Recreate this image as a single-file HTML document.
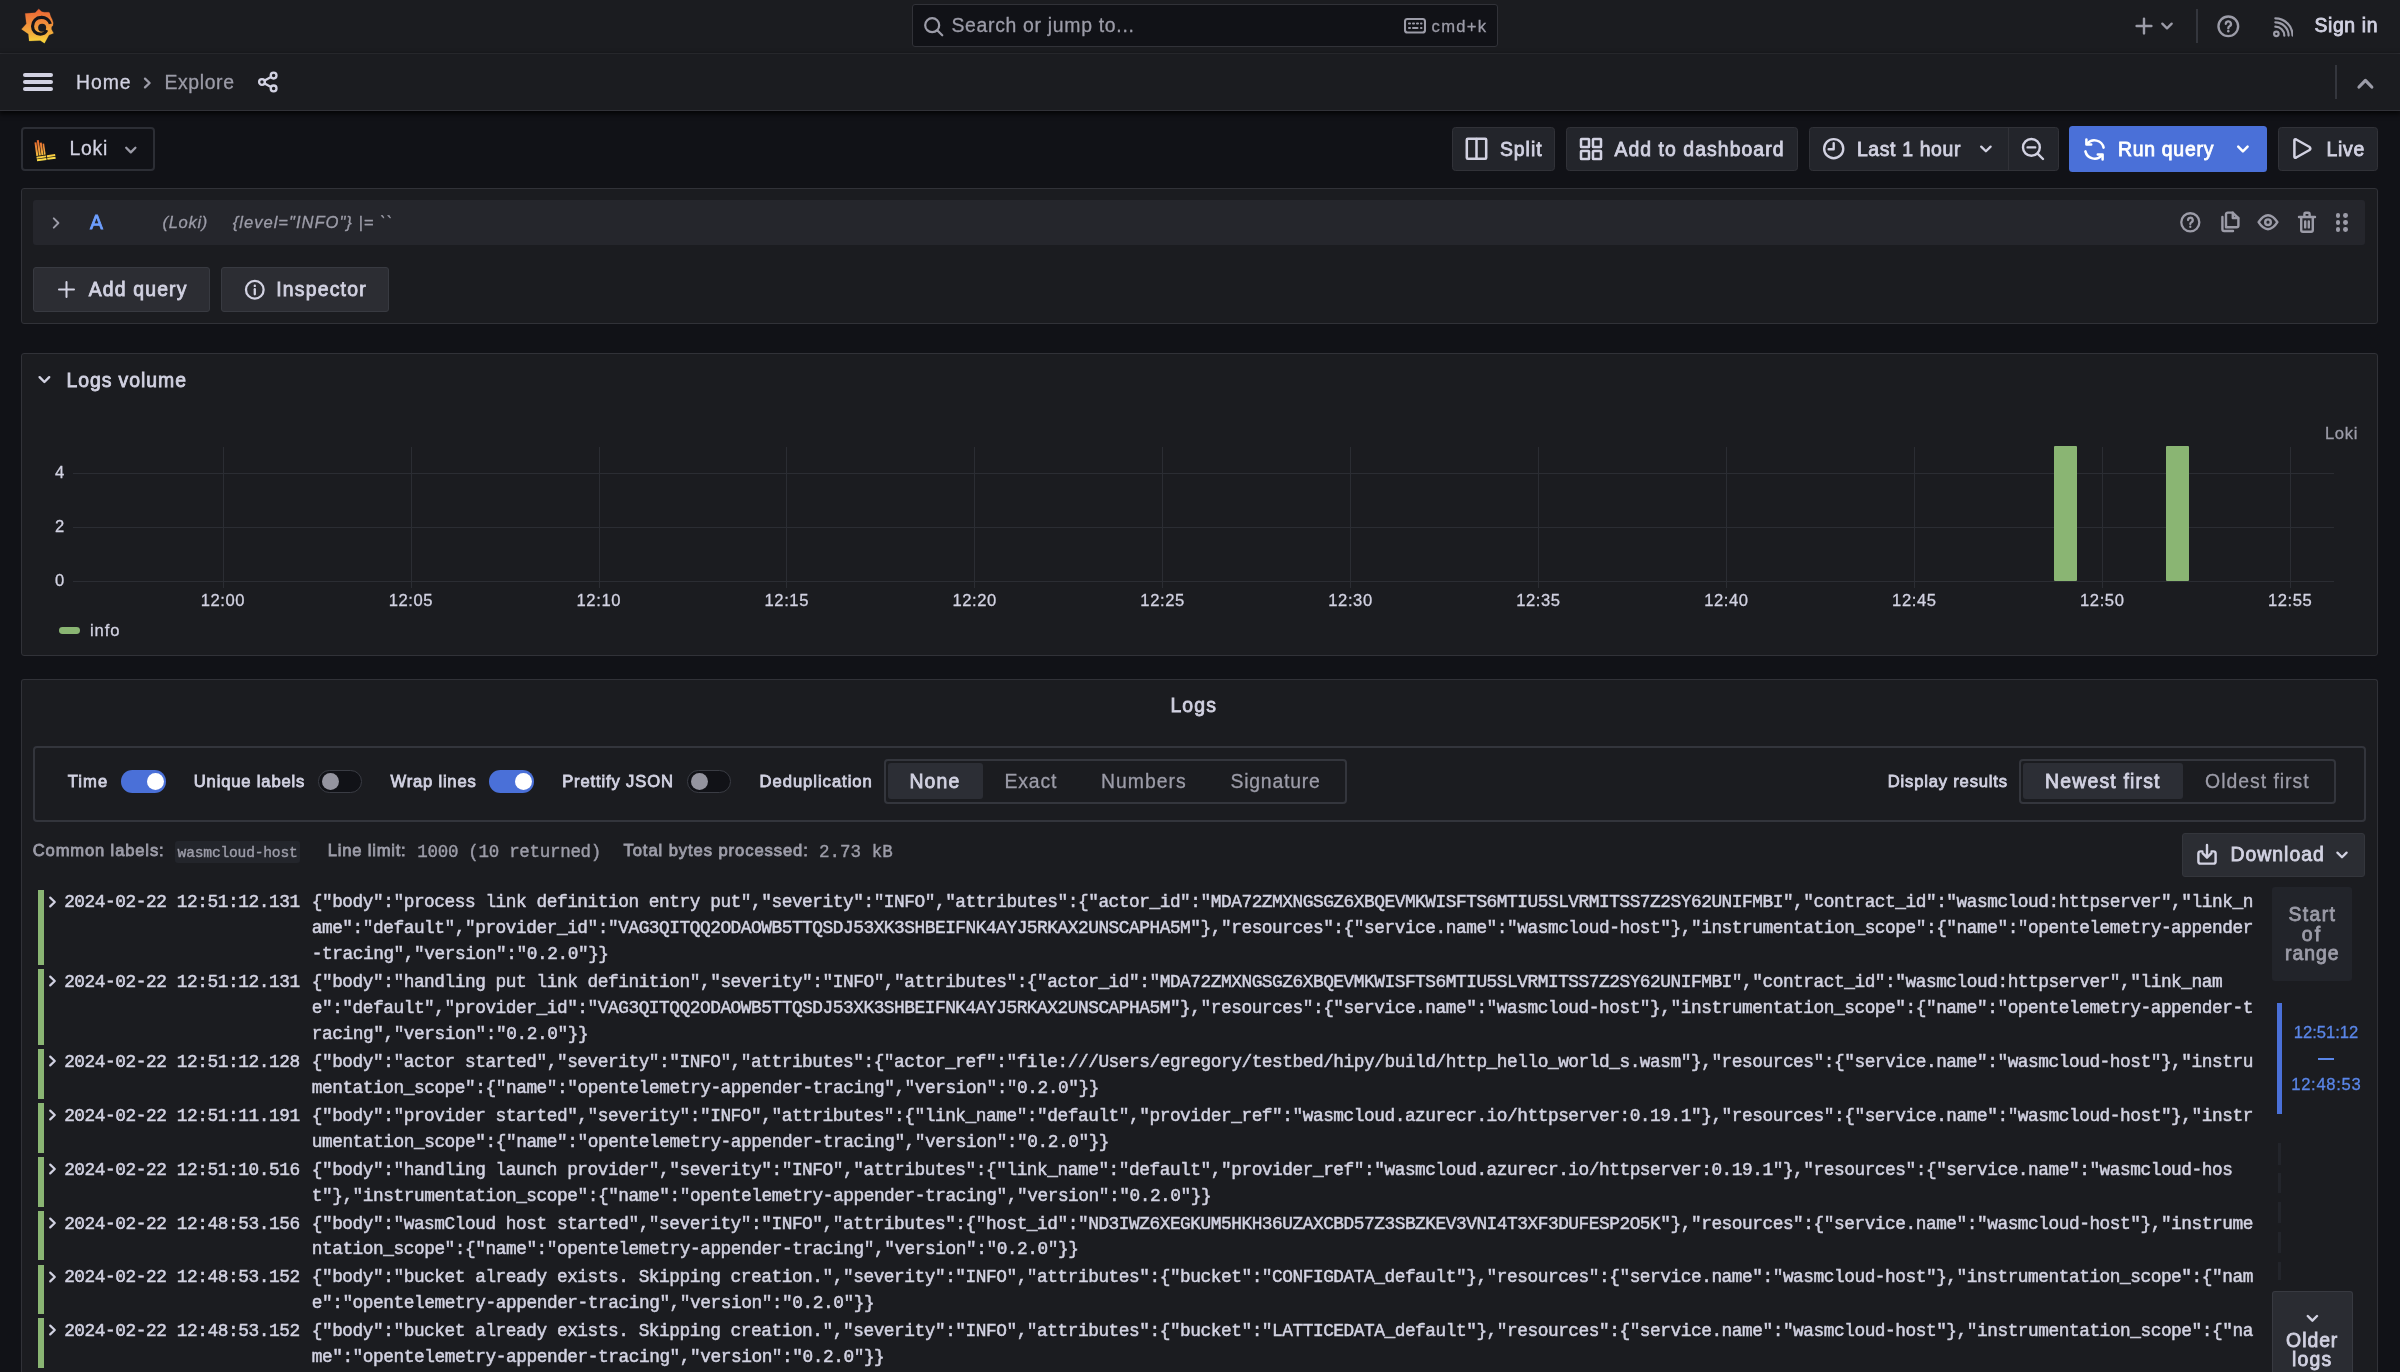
<!DOCTYPE html>
<html lang="en"><head><meta charset="utf-8"><title>Explore - Loki - Grafana</title>
<style>
html,body{margin:0;padding:0;}
html{width:2400px;height:1372px;overflow:hidden;background:#111217;}
body{width:2400px;height:1372px;overflow:hidden;background:#111217;position:relative;font-family:'Liberation Sans', sans-serif;}
.b{position:absolute;box-sizing:border-box;display:block;}
.t{position:absolute;white-space:pre;display:block;}
.tx{position:absolute;left:0;top:0;width:2400px;height:1372px;will-change:transform;pointer-events:none;overflow:hidden;}
header,nav,main,section{display:block;margin:0;padding:0;}
</style></head>
<body>
<header class="top-bar" aria-label="Top navigation">
<div class="bx">
<div class="b" style="left:0px;top:0px;width:2400px;height:54px;background:#1b1c20;border-bottom:1px solid #313238;"></div>
<svg class="b" style="left:10px;top:0px;" width="60" height="50" viewBox="0 0 1646 1372" fill="none" stroke-linecap="round" stroke-linejoin="round">
<defs><linearGradient id="gl" gradientUnits="userSpaceOnUse" x1="0" y1="245" x2="0" y2="1185"><stop offset="0" stop-color="#ec6434"/><stop offset="0.4" stop-color="#f08a3a"/><stop offset="0.75" stop-color="#f3b23c"/><stop offset="1" stop-color="#fadb3c"/></linearGradient></defs>
<path fill="url(#gl)" stroke="url(#gl)" stroke-width="6" d="M790 248 L872 322 Q960 345 1058 336 L1086 352 Q1100 440 1160 540 Q1200 620 1176 704 L1150 722 Q1128 760 1136 800 L1194 910 L1070 960 L946 1184 L830 1110 L526 1124 L506 930 L316 800 L450 650 L416 372 L690 350 Z"/>
<path stroke="#15161b" stroke-width="86" fill="none" stroke-linecap="butt" d="M1108 655 A245 240 0 0 0 850 476 A236 245 0 0 0 618 722 A214 214 0 0 0 830 936 A196 196 0 0 0 1008 826"/>
<circle cx="882" cy="762" r="110" fill="#1a1b20" stroke="none"/>
</svg>
<div class="b" style="left:912px;top:4px;width:586px;height:43px;background:#111217;border:1px solid #313238;border-radius:3px;"></div>
<svg class="b" style="left:923px;top:15.5px;" width="21" height="21" viewBox="0 0 24 24" fill="none" stroke-linecap="round" stroke-linejoin="round"><g stroke="#9c9ca8" stroke-width="2.53"><circle cx="10.5" cy="10.5" r="8"/><path d="M16.5 16.5 L22 22"/></g></svg>
<svg class="b" style="left:1404px;top:18px;" width="22" height="15.5" viewBox="0 0 22 15.5" fill="none" stroke-linecap="round" stroke-linejoin="round"><g stroke="#9c9ca8" stroke-width="2.07"><rect x="1" y="1" width="20" height="13.5" rx="2.5"/><path d="M5 5.5h1M9 5.5h1M13 5.5h1M17 5.5h0.5M5 10h1M9 10h4.5M17 10h0.5"/></g></svg>
<svg class="b" style="left:2133.5px;top:15.7px;" width="20" height="20" viewBox="0 0 20 20" fill="none" stroke-linecap="round" stroke-linejoin="round"><g stroke="#9c9ca8" stroke-width="2.42"><path d="M10 2.6V17.4M2.6 10H17.4"/></g></svg>
<svg class="b" style="left:2160px;top:20px;" width="14" height="12" viewBox="0 0 14 12" fill="none" stroke-linecap="round" stroke-linejoin="round"><g stroke="#9c9ca8" stroke-width="2.3"><path d="M2.3 3.6 L7 8.4 L11.7 3.6"/></g></svg>
<div class="b" style="left:2196px;top:9px;width:2px;height:34px;background:#34363d;"></div>
<svg class="b" style="left:2216px;top:13.5px;" width="24.6" height="24.6" viewBox="0 0 24 24" fill="none" stroke-linecap="round" stroke-linejoin="round"><g stroke="#9c9ca8" stroke-width="2.3"><circle cx="12" cy="12" r="9.6"/><path d="M9.6 9.6a2.5 2.5 0 1 1 3.6 2.3c-.8.4-1.2 1-1.2 1.9"/><path d="M12 16.6v.3" stroke-width="2.4"/></g></svg>
<svg class="b" style="left:2271.6px;top:16.6px;" width="21.8" height="21.8" viewBox="0 0 23 23" fill="none" stroke-linecap="round" stroke-linejoin="round"><g stroke="#9c9ca8" stroke-width="2.3"><circle cx="4.6" cy="17.8" r="2.4"/><path d="M3.5 10.2a9.5 9.5 0 0 1 9.5 9.5"/><path d="M3.5 5.6a14 14 0 0 1 14 14"/><path d="M3.5 1.4a18.2 18.2 0 0 1 18.2 18.2"/></g></svg>
</div>
<div class="tx">
<span class="t" style="font-family:'Liberation Sans', sans-serif;font-size:19.4px;font-weight:400;color:#9c9ca8;-webkit-text-stroke:0.3px #9c9ca8;letter-spacing:0.697px;left:951.42px;top:14.28px;line-height:23px;">Search or jump to...</span>
<span class="t" style="font-family:'Liberation Sans', sans-serif;font-size:16.6px;font-weight:400;color:#9c9ca8;-webkit-text-stroke:0.3px #9c9ca8;letter-spacing:1.330px;left:1431.50px;top:16.55px;line-height:20px;">cmd+k</span>
<span class="t" style="font-family:'Liberation Sans', sans-serif;font-size:19.4px;font-weight:400;color:#d2d2e2;-webkit-text-stroke:0.8px #d2d2e2;letter-spacing:0.624px;left:2314.42px;top:14.38px;line-height:23px;">Sign in</span>
</div>
</header>
<nav class="breadcrumb-bar" aria-label="Breadcrumbs">
<div class="bx">
<div class="b" style="left:0px;top:54px;width:2400px;height:57px;background:#1b1c20;border-bottom:1px solid #313238;box-shadow:0 2px 5px 1px rgba(0,0,0,0.75);"></div>
<div class="b" style="left:22.5px;top:72.8px;width:30px;height:4.5px;background:#d2d2e2;border-radius:2.25px;"></div>
<div class="b" style="left:22.5px;top:79.8px;width:30px;height:4.5px;background:#d2d2e2;border-radius:2.25px;"></div>
<div class="b" style="left:22.5px;top:86.8px;width:30px;height:4.5px;background:#d2d2e2;border-radius:2.25px;"></div>
<svg class="b" style="left:141px;top:75px;" width="12" height="16" viewBox="0 0 12 16" fill="none" stroke-linecap="round" stroke-linejoin="round"><g stroke="#9c9ca8" stroke-width="2.3"><path d="M4 3.6 L8.6 8 L4 12.4"/></g></svg>
<svg class="b" style="left:257px;top:71px;" width="22" height="22" viewBox="0 0 22 22" fill="none" stroke-linecap="round" stroke-linejoin="round"><g stroke="#d2d2e2" stroke-width="2.3"><circle cx="16.6" cy="4.6" r="2.9"/><circle cx="5" cy="11" r="2.9"/><circle cx="16.6" cy="17.4" r="2.9"/><path d="M7.6 9.6 L14 6M7.6 12.4 L14 16"/></g></svg>
<div class="b" style="left:2334.5px;top:65px;width:2px;height:34px;background:#34363d;"></div>
<svg class="b" style="left:2355px;top:75px;" width="20" height="16" viewBox="0 0 20 16" fill="none" stroke-linecap="round" stroke-linejoin="round"><g stroke="#9c9ca8" stroke-width="3.22"><path d="M4 12 L10.4 5.4 L16.8 12"/></g></svg>
</div>
<div class="tx">
<span class="t" style="font-family:'Liberation Sans', sans-serif;font-size:19.4px;font-weight:400;color:#d2d2e2;-webkit-text-stroke:0.3px #d2d2e2;letter-spacing:0.982px;left:75.92px;top:70.78px;line-height:23px;">Home</span>
<span class="t" style="font-family:'Liberation Sans', sans-serif;font-size:19.4px;font-weight:400;color:#9c9ca8;-webkit-text-stroke:0.3px #9c9ca8;letter-spacing:0.631px;left:164.42px;top:70.78px;line-height:23px;">Explore</span>
</div>
</nav>
<section class="explore-toolbar" role="toolbar" aria-label="Explore toolbar">
<div class="bx">
<div class="b" style="left:21px;top:126.5px;width:133.5px;height:44.5px;background:#111217;border:2px solid #2c2e35;border-radius:4px;"></div>
<svg class="b" style="left:33px;top:138px;" width="23" height="25" viewBox="0 0 23 25" fill="none" stroke-linecap="round" stroke-linejoin="round">
<defs><linearGradient id="lk" gradientUnits="userSpaceOnUse" x1="0" y1="1.4" x2="0" y2="22.2"><stop offset="0" stop-color="#e8652d"/><stop offset="0.45" stop-color="#f0943a"/><stop offset="0.78" stop-color="#f7c83f"/><stop offset="1" stop-color="#fbe04a"/></linearGradient></defs>
<g transform="rotate(-8 11 12)" stroke="none" fill="url(#lk)">
<rect x="2.6" y="3.2" width="2.0" height="13.6"/><rect x="5.2" y="1.4" width="2.0" height="15.4"/><rect x="7.8" y="4.2" width="2.0" height="12.6"/><rect x="10.4" y="5.6" width="1.6" height="11.2"/>
<rect x="2.6" y="17.6" width="9.6" height="2.0"/><rect x="2.6" y="20.2" width="9.6" height="2.0"/>
<rect x="13.0" y="17.6" width="8.4" height="2.0"/><rect x="13.0" y="20.2" width="8.4" height="2.0"/>
</g></svg>
<svg class="b" style="left:124px;top:144px;" width="14" height="12" viewBox="0 0 14 12" fill="none" stroke-linecap="round" stroke-linejoin="round"><g stroke="#9c9ca8" stroke-width="2.3"><path d="M2.2 3.8 L6.8 8.4 L11.4 3.8"/></g></svg>
<div class="b" style="left:1451.5px;top:126.5px;width:103.5px;height:44.5px;background:#23252b;border:1px solid #313238;border-radius:3.5px;"></div>
<svg class="b" style="left:1465px;top:137px;" width="23" height="23.6" viewBox="0 0 23 23.6" fill="none" stroke-linecap="round" stroke-linejoin="round"><g stroke="#d2d2e2" stroke-width="2.53"><rect x="1.8" y="1.8" width="19.4" height="20" rx="1"/><path d="M11.5 2v19.6"/></g></svg>
<div class="b" style="left:1566px;top:126.5px;width:231.5px;height:44.5px;background:#23252b;border:1px solid #313238;border-radius:3.5px;"></div>
<svg class="b" style="left:1579px;top:137px;" width="24" height="24" viewBox="0 0 24 24" fill="none" stroke-linecap="round" stroke-linejoin="round"><g stroke="#d2d2e2" stroke-width="2.53"><rect x="2" y="2" width="8" height="8" rx="0.6"/><rect x="14" y="2" width="8" height="8" rx="0.6"/><rect x="2" y="14" width="8" height="8" rx="0.6"/><rect x="14" y="14" width="8" height="8" rx="0.6"/></g></svg>
<div class="b" style="left:1808.5px;top:126.5px;width:250.0px;height:44.5px;background:#23252b;border:1px solid #313238;border-radius:3.5px;"></div>
<div class="b" style="left:2008px;top:127.5px;width:1px;height:42.5px;background:#313238;"></div>
<svg class="b" style="left:1822px;top:137.3px;" width="23.4" height="23.4" viewBox="0 0 24 24" fill="none" stroke-linecap="round" stroke-linejoin="round"><g stroke="#d2d2e2" stroke-width="2.42"><circle cx="12" cy="12" r="9.8"/><path d="M12 6.4V12.6H6.8"/></g></svg>
<svg class="b" style="left:1978.5px;top:143px;" width="14" height="12" viewBox="0 0 14 12" fill="none" stroke-linecap="round" stroke-linejoin="round"><g stroke="#d2d2e2" stroke-width="2.3"><path d="M2.2 3.6 L6.9 8.3 L11.6 3.6"/></g></svg>
<svg class="b" style="left:2021px;top:137px;" width="24" height="24" viewBox="0 0 24 24" fill="none" stroke-linecap="round" stroke-linejoin="round"><g stroke="#d2d2e2" stroke-width="2.42"><circle cx="10.4" cy="10.4" r="8.4"/><path d="M16.6 16.6 L22 22M6.6 10.4h7.6"/></g></svg>
<div class="b" style="left:2069px;top:126px;width:198px;height:45.5px;background:#4a70d8;border-radius:3.5px;"></div>
<svg class="b" style="left:2082px;top:136.5px;" width="25" height="25" viewBox="0 0 25 25" fill="none" stroke-linecap="round" stroke-linejoin="round"><g stroke="#ffffff" stroke-width="2.53"><path d="M21.6 10.6a9.4 9.4 0 0 0-16.4-3.8"/><path d="M4.4 2.6v4.8h4.8"/><path d="M3.4 14.4a9.4 9.4 0 0 0 16.4 3.8"/><path d="M20.6 22.4v-4.8h-4.8"/></g></svg>
<svg class="b" style="left:2235.5px;top:143px;" width="14" height="12" viewBox="0 0 14 12" fill="none" stroke-linecap="round" stroke-linejoin="round"><g stroke="#ffffff" stroke-width="2.53"><path d="M2.2 3.6 L6.9 8.3 L11.6 3.6"/></g></svg>
<div class="b" style="left:2277.5px;top:126.5px;width:100.5px;height:44.5px;background:#23252b;border:1px solid #313238;border-radius:3.5px;"></div>
<svg class="b" style="left:2291px;top:137px;" width="22" height="23" viewBox="0 0 22 23" fill="none" stroke-linecap="round" stroke-linejoin="round"><g stroke="#d2d2e2" stroke-width="2.53"><path d="M3.4 3.4 Q3.4 1.6 5.2 2.5 L18.6 10 Q20 11.5 18.6 13 L5.2 20.5 Q3.4 21.4 3.4 19.6 Z"/></g></svg>
</div>
<div class="tx">
<span class="t" style="font-family:'Liberation Sans', sans-serif;font-size:19.4px;font-weight:400;color:#d2d2e2;-webkit-text-stroke:0.3px #d2d2e2;letter-spacing:0.771px;left:69.42px;top:137.38px;line-height:23px;">Loki</span>
<span class="t" style="font-family:'Liberation Sans', sans-serif;font-size:19.4px;font-weight:400;color:#d2d2e2;-webkit-text-stroke:0.8px #d2d2e2;letter-spacing:0.986px;left:1499.92px;top:137.58px;line-height:23px;">Split</span>
<span class="t" style="font-family:'Liberation Sans', sans-serif;font-size:19.4px;font-weight:400;color:#d2d2e2;-webkit-text-stroke:0.8px #d2d2e2;letter-spacing:1.067px;left:1614.42px;top:137.58px;line-height:23px;">Add to dashboard</span>
<span class="t" style="font-family:'Liberation Sans', sans-serif;font-size:19.4px;font-weight:400;color:#d2d2e2;-webkit-text-stroke:0.8px #d2d2e2;letter-spacing:0.648px;left:1856.92px;top:137.58px;line-height:23px;">Last 1 hour</span>
<span class="t" style="font-family:'Liberation Sans', sans-serif;font-size:19.4px;font-weight:400;color:#ffffff;-webkit-text-stroke:0.8px #ffffff;letter-spacing:0.744px;left:2117.92px;top:137.58px;line-height:23px;">Run query</span>
<span class="t" style="font-family:'Liberation Sans', sans-serif;font-size:19.4px;font-weight:400;color:#d2d2e2;-webkit-text-stroke:0.8px #d2d2e2;letter-spacing:0.771px;left:2326.42px;top:137.58px;line-height:23px;">Live</span>
</div>
</section>
<section class="query-editor" aria-label="Query editor">
<div class="bx">
<div class="b" style="left:21px;top:188px;width:2357px;height:135.5px;background:#1b1c20;border:1px solid #313238;border-radius:3px;"></div>
<div class="b" style="left:33.3px;top:200px;width:2332px;height:44.5px;background:#25262c;border-radius:3px;"></div>
<svg class="b" style="left:49.5px;top:214.5px;" width="12" height="16" viewBox="0 0 12 16" fill="none" stroke-linecap="round" stroke-linejoin="round"><g stroke="#9c9ca8" stroke-width="1.95"><path d="M3.8 3.4 L8.4 8 L3.8 12.6"/></g></svg>
<svg class="b" style="left:2179px;top:211px;" width="22.6" height="22.6" viewBox="0 0 24 24" fill="none" stroke-linecap="round" stroke-linejoin="round"><g stroke="#9c9ca8" stroke-width="2.42"><circle cx="12" cy="12" r="9.6"/><path d="M9.6 9.6a2.5 2.5 0 1 1 3.6 2.3c-.8.4-1.2 1-1.2 1.9"/><path d="M12 16.6v.3" stroke-width="2.4"/></g></svg>
<svg class="b" style="left:2218.5px;top:211.4px;" width="21" height="21.6" viewBox="0 0 21 21.6" fill="none" stroke-linecap="round" stroke-linejoin="round"><g stroke="#9c9ca8" stroke-width="2.42"><path d="M7 16.2V3.4Q7 1.6 8.8 1.6H13.6L19.4 7.2V14.4Q19.4 16.2 17.6 16.2Z"/><path d="M13.8 1.8V7h5.4"/><path d="M3.4 6V18.2Q3.4 20 5.2 20H14"/></g></svg>
<svg class="b" style="left:2257px;top:213.4px;" width="22" height="18.4" viewBox="0 0 22 18.4" fill="none" stroke-linecap="round" stroke-linejoin="round"><g stroke="#9c9ca8" stroke-width="2.42"><path d="M1.6 9.2Q6 2.2 11 2.2T20.4 9.2Q16 16.2 11 16.2T1.6 9.2Z"/><circle cx="11" cy="9.2" r="2.8"/></g></svg>
<svg class="b" style="left:2296.5px;top:211px;" width="20" height="22.4" viewBox="0 0 20 22.4" fill="none" stroke-linecap="round" stroke-linejoin="round"><g stroke="#9c9ca8" stroke-width="2.42"><path d="M2 6h16M7.4 5.6V3Q7.4 1.8 8.6 1.8H11.4Q12.6 1.8 12.6 3V5.6M4.2 6.4V19Q4.2 20.8 6 20.8H14Q15.8 20.8 15.8 19V6.4M8.2 10.4V16.4M11.8 10.4V16.4"/></g></svg>
<div class="b" style="left:2335.6px;top:212.79999999999998px;width:4.8px;height:4.8px;background:#9c9ca8;border-radius:2.4px;"></div>
<div class="b" style="left:2335.6px;top:220.0px;width:4.8px;height:4.8px;background:#9c9ca8;border-radius:2.4px;"></div>
<div class="b" style="left:2335.6px;top:227.29999999999998px;width:4.8px;height:4.8px;background:#9c9ca8;border-radius:2.4px;"></div>
<div class="b" style="left:2343.2px;top:212.79999999999998px;width:4.8px;height:4.8px;background:#9c9ca8;border-radius:2.4px;"></div>
<div class="b" style="left:2343.2px;top:220.0px;width:4.8px;height:4.8px;background:#9c9ca8;border-radius:2.4px;"></div>
<div class="b" style="left:2343.2px;top:227.29999999999998px;width:4.8px;height:4.8px;background:#9c9ca8;border-radius:2.4px;"></div>
<div class="b" style="left:33.3px;top:267px;width:176.5px;height:44.5px;background:#2c2d33;border:1px solid #383a41;border-radius:3px;"></div>
<svg class="b" style="left:57px;top:280px;" width="19" height="19" viewBox="0 0 19 19" fill="none" stroke-linecap="round" stroke-linejoin="round"><g stroke="#d2d2e2" stroke-width="2.01"><path d="M9.5 2V17M2 9.5H17"/></g></svg>
<div class="b" style="left:221px;top:267px;width:168px;height:44.5px;background:#2c2d33;border:1px solid #383a41;border-radius:3px;"></div>
<svg class="b" style="left:243.5px;top:278.5px;" width="21.6" height="21.6" viewBox="0 0 24 24" fill="none" stroke-linecap="round" stroke-linejoin="round"><g stroke="#d2d2e2" stroke-width="2.53"><circle cx="12" cy="12" r="9.8"/><path d="M12 11.4V17"/><path d="M12 7.4v.3" stroke-width="2.6"/></g></svg>
</div>
<div class="tx">
<span class="t" style="font-family:'Liberation Sans', sans-serif;font-size:19.4px;font-weight:400;color:#6e9fff;-webkit-text-stroke:0.8px #6e9fff;left:89.92px;top:211.18px;line-height:23px;">A</span>
<span class="t" style="font-family:'Liberation Sans', sans-serif;font-size:16.6px;font-weight:400;color:#9c9ca8;font-style:italic;-webkit-text-stroke:0.3px #9c9ca8;letter-spacing:0.666px;left:162.50px;top:212.95px;line-height:20px;">(Loki)</span>
<span class="t" style="font-family:'Liberation Sans', sans-serif;font-size:16.6px;font-weight:400;color:#9c9ca8;font-style:italic;-webkit-text-stroke:0.3px #9c9ca8;letter-spacing:0.980px;left:232.80px;top:212.95px;line-height:20px;">{level="INFO"} |= ``</span>
<span class="t" style="font-family:'Liberation Sans', sans-serif;font-size:19.4px;font-weight:400;color:#d2d2e2;-webkit-text-stroke:0.8px #d2d2e2;letter-spacing:1.162px;left:88.72px;top:277.98px;line-height:23px;">Add query</span>
<span class="t" style="font-family:'Liberation Sans', sans-serif;font-size:19.4px;font-weight:400;color:#d2d2e2;-webkit-text-stroke:0.8px #d2d2e2;letter-spacing:1.211px;left:276.22px;top:277.98px;line-height:23px;">Inspector</span>
</div>
</section>
<section class="panel logs-volume" aria-label="Logs volume">
<div class="bx">
<div class="b" style="left:21px;top:353px;width:2357px;height:303px;background:#1b1c20;border:1px solid #313238;border-radius:3px;"></div>
<svg class="b" style="left:37px;top:372.5px;" width="15" height="13" viewBox="0 0 15 13" fill="none" stroke-linecap="round" stroke-linejoin="round"><g stroke="#d2d2e2" stroke-width="2.42"><path d="M2.6 4.2 L7.4 9 L12.2 4.2"/></g></svg>
<div class="b" style="left:72.5px;top:473px;width:2261px;height:1px;background:#2b2d33;"></div>
<div class="b" style="left:72.5px;top:527px;width:2261px;height:1px;background:#2b2d33;"></div>
<div class="b" style="left:72.5px;top:581px;width:2261px;height:1px;background:#2b2d33;"></div>
<div class="b" style="left:223px;top:446.5px;width:1px;height:141px;background:#2b2d33;"></div>
<div class="b" style="left:411px;top:446.5px;width:1px;height:141px;background:#2b2d33;"></div>
<div class="b" style="left:599px;top:446.5px;width:1px;height:141px;background:#2b2d33;"></div>
<div class="b" style="left:786px;top:446.5px;width:1px;height:141px;background:#2b2d33;"></div>
<div class="b" style="left:974px;top:446.5px;width:1px;height:141px;background:#2b2d33;"></div>
<div class="b" style="left:1162px;top:446.5px;width:1px;height:141px;background:#2b2d33;"></div>
<div class="b" style="left:1350px;top:446.5px;width:1px;height:141px;background:#2b2d33;"></div>
<div class="b" style="left:1538px;top:446.5px;width:1px;height:141px;background:#2b2d33;"></div>
<div class="b" style="left:1726px;top:446.5px;width:1px;height:141px;background:#2b2d33;"></div>
<div class="b" style="left:1914px;top:446.5px;width:1px;height:141px;background:#2b2d33;"></div>
<div class="b" style="left:2102px;top:446.5px;width:1px;height:141px;background:#2b2d33;"></div>
<div class="b" style="left:2290px;top:446.5px;width:1px;height:141px;background:#2b2d33;"></div>
<div class="b" style="left:2053.7px;top:446px;width:23px;height:135.3px;background:#8ab573;border-radius:1px;"></div>
<div class="b" style="left:2166px;top:446px;width:23px;height:135.3px;background:#8ab573;border-radius:1px;"></div>
<div class="b" style="left:59.3px;top:627.3px;width:20.7px;height:6.7px;background:#8ab573;border-radius:3.4px;"></div>
</div>
<div class="tx">
<span class="t" style="font-family:'Liberation Sans', sans-serif;font-size:19.4px;font-weight:400;color:#d2d2e2;-webkit-text-stroke:0.8px #d2d2e2;letter-spacing:0.956px;left:66.42px;top:369.38px;line-height:23px;">Logs volume</span>
<span class="t" style="font-family:'Liberation Sans', sans-serif;font-size:16.6px;font-weight:400;color:#9c9ca8;-webkit-text-stroke:0.3px #9c9ca8;letter-spacing:0.636px;left:2325.00px;top:424.25px;line-height:20px;">Loki</span>
<span class="t" style="font-family:'Liberation Sans', sans-serif;font-size:16.6px;font-weight:400;color:#d2d2e2;-webkit-text-stroke:0.3px #d2d2e2;left:55.00px;top:462.85px;line-height:20px;">4</span>
<span class="t" style="font-family:'Liberation Sans', sans-serif;font-size:16.6px;font-weight:400;color:#d2d2e2;-webkit-text-stroke:0.3px #d2d2e2;left:55.00px;top:516.85px;line-height:20px;">2</span>
<span class="t" style="font-family:'Liberation Sans', sans-serif;font-size:16.6px;font-weight:400;color:#d2d2e2;-webkit-text-stroke:0.3px #d2d2e2;left:55.00px;top:570.85px;line-height:20px;">0</span>
<span class="t" style="font-family:'Liberation Sans', sans-serif;font-size:16.6px;font-weight:400;color:#d2d2e2;-webkit-text-stroke:0.3px #d2d2e2;letter-spacing:0.593px;left:200.70px;top:590.55px;line-height:20px;">12:00</span>
<span class="t" style="font-family:'Liberation Sans', sans-serif;font-size:16.6px;font-weight:400;color:#d2d2e2;-webkit-text-stroke:0.3px #d2d2e2;letter-spacing:0.593px;left:388.63px;top:590.55px;line-height:20px;">12:05</span>
<span class="t" style="font-family:'Liberation Sans', sans-serif;font-size:16.6px;font-weight:400;color:#d2d2e2;-webkit-text-stroke:0.3px #d2d2e2;letter-spacing:0.593px;left:576.56px;top:590.55px;line-height:20px;">12:10</span>
<span class="t" style="font-family:'Liberation Sans', sans-serif;font-size:16.6px;font-weight:400;color:#d2d2e2;-webkit-text-stroke:0.3px #d2d2e2;letter-spacing:0.593px;left:764.49px;top:590.55px;line-height:20px;">12:15</span>
<span class="t" style="font-family:'Liberation Sans', sans-serif;font-size:16.6px;font-weight:400;color:#d2d2e2;-webkit-text-stroke:0.3px #d2d2e2;letter-spacing:0.593px;left:952.42px;top:590.55px;line-height:20px;">12:20</span>
<span class="t" style="font-family:'Liberation Sans', sans-serif;font-size:16.6px;font-weight:400;color:#d2d2e2;-webkit-text-stroke:0.3px #d2d2e2;letter-spacing:0.593px;left:1140.35px;top:590.55px;line-height:20px;">12:25</span>
<span class="t" style="font-family:'Liberation Sans', sans-serif;font-size:16.6px;font-weight:400;color:#d2d2e2;-webkit-text-stroke:0.3px #d2d2e2;letter-spacing:0.593px;left:1328.28px;top:590.55px;line-height:20px;">12:30</span>
<span class="t" style="font-family:'Liberation Sans', sans-serif;font-size:16.6px;font-weight:400;color:#d2d2e2;-webkit-text-stroke:0.3px #d2d2e2;letter-spacing:0.593px;left:1516.21px;top:590.55px;line-height:20px;">12:35</span>
<span class="t" style="font-family:'Liberation Sans', sans-serif;font-size:16.6px;font-weight:400;color:#d2d2e2;-webkit-text-stroke:0.3px #d2d2e2;letter-spacing:0.593px;left:1704.14px;top:590.55px;line-height:20px;">12:40</span>
<span class="t" style="font-family:'Liberation Sans', sans-serif;font-size:16.6px;font-weight:400;color:#d2d2e2;-webkit-text-stroke:0.3px #d2d2e2;letter-spacing:0.593px;left:1892.07px;top:590.55px;line-height:20px;">12:45</span>
<span class="t" style="font-family:'Liberation Sans', sans-serif;font-size:16.6px;font-weight:400;color:#d2d2e2;-webkit-text-stroke:0.3px #d2d2e2;letter-spacing:0.593px;left:2080.00px;top:590.55px;line-height:20px;">12:50</span>
<span class="t" style="font-family:'Liberation Sans', sans-serif;font-size:16.6px;font-weight:400;color:#d2d2e2;-webkit-text-stroke:0.3px #d2d2e2;letter-spacing:0.593px;left:2267.93px;top:590.55px;line-height:20px;">12:55</span>
<span class="t" style="font-family:'Liberation Sans', sans-serif;font-size:16.6px;font-weight:400;color:#d2d2e2;-webkit-text-stroke:0.3px #d2d2e2;letter-spacing:0.933px;left:90.00px;top:620.55px;line-height:20px;">info</span>
</div>
</section>
<section class="panel logs" aria-label="Logs">
<div class="bx">
<div class="b" style="left:21px;top:679px;width:2357px;height:693px;background:#1b1c20;border:1px solid #313238;border-radius:3px;border-bottom:none;border-bottom-left-radius:0;border-bottom-right-radius:0;"></div>
<div class="b" style="left:33px;top:746px;width:2332.5px;height:76px;border:2px solid #33353c;border-radius:4px;"></div>
<div class="b" style="left:120.7px;top:770px;width:45px;height:22.6px;background:#4a70d8;border-radius:11.3px;"></div>
<div class="b" style="left:146.7px;top:772.6px;width:17.4px;height:17.4px;background:#ffffff;border-radius:8.7px;"></div>
<div class="b" style="left:317.7px;top:770px;width:44.5px;height:22.6px;background:#111217;border:1px solid #3a3c44;border-radius:11.3px;"></div>
<div class="b" style="left:321.7px;top:772.6px;width:17.4px;height:17.4px;background:#94949f;border-radius:8.7px;"></div>
<div class="b" style="left:489px;top:770px;width:45px;height:22.6px;background:#4a70d8;border-radius:11.3px;"></div>
<div class="b" style="left:515px;top:772.6px;width:17.4px;height:17.4px;background:#ffffff;border-radius:8.7px;"></div>
<div class="b" style="left:686.5px;top:770px;width:44.5px;height:22.6px;background:#111217;border:1px solid #3a3c44;border-radius:11.3px;"></div>
<div class="b" style="left:690.5px;top:772.6px;width:17.4px;height:17.4px;background:#94949f;border-radius:8.7px;"></div>
<div class="b" style="left:883.7px;top:758.7px;width:463.8px;height:45px;border:2px solid #34363d;border-radius:4px;"></div>
<div class="b" style="left:887.7px;top:762.7px;width:95px;height:36.6px;background:#2c2e35;border-radius:3px;"></div>
<div class="b" style="left:2019px;top:758.7px;width:317.3px;height:45px;border:2px solid #34363d;border-radius:4px;"></div>
<div class="b" style="left:2022.7px;top:762.7px;width:160.6px;height:36.6px;background:#2c2e35;border-radius:3px;"></div>
<div class="b" style="left:175px;top:841px;width:125px;height:21.7px;background:#23252b;border-radius:3px;"></div>
<div class="b" style="left:2181.7px;top:832.7px;width:183.3px;height:44.3px;background:#2b2d33;border:1px solid #34363c;border-radius:3px;"></div>
<svg class="b" style="left:2195.5px;top:843px;" width="22" height="23" viewBox="0 0 22 23" fill="none" stroke-linecap="round" stroke-linejoin="round"><g stroke="#d2d2e2" stroke-width="2.42"><path d="M11 2V14.4M6.6 10.2 L11 14.6 L15.4 10.2"/><path d="M6.4 8.4H4.6Q2.4 8.4 2.4 10.6V18.4Q2.4 20.6 4.6 20.6H17.4Q19.6 20.6 19.6 18.4V10.6Q19.6 8.4 17.4 8.4H15.6"/></g></svg>
<svg class="b" style="left:2335px;top:849px;" width="14" height="12" viewBox="0 0 14 12" fill="none" stroke-linecap="round" stroke-linejoin="round"><g stroke="#d2d2e2" stroke-width="2.3"><path d="M2.4 3.6 L7 8.2 L11.6 3.6"/></g></svg>
<div class="b" style="left:38.4px;top:889.5px;width:5.3px;height:75.8px;background:#8ab573;"></div>
<svg class="b" style="left:47px;top:894.5px;" width="11" height="14" viewBox="0 0 11 14" fill="none" stroke-linecap="round" stroke-linejoin="round"><g stroke="#d2d2e2" stroke-width="2.18"><path d="M3.2 2.6 L7.8 7 L3.2 11.4"/></g></svg>
<div class="b" style="left:38.4px;top:969.3px;width:5.3px;height:75.8px;background:#8ab573;"></div>
<svg class="b" style="left:47px;top:974.27px;" width="11" height="14" viewBox="0 0 11 14" fill="none" stroke-linecap="round" stroke-linejoin="round"><g stroke="#d2d2e2" stroke-width="2.18"><path d="M3.2 2.6 L7.8 7 L3.2 11.4"/></g></svg>
<div class="b" style="left:38.4px;top:1049.0px;width:5.3px;height:49.9px;background:#8ab573;"></div>
<svg class="b" style="left:47px;top:1054.04px;" width="11" height="14" viewBox="0 0 11 14" fill="none" stroke-linecap="round" stroke-linejoin="round"><g stroke="#d2d2e2" stroke-width="2.18"><path d="M3.2 2.6 L7.8 7 L3.2 11.4"/></g></svg>
<div class="b" style="left:38.4px;top:1102.9px;width:5.3px;height:49.9px;background:#8ab573;"></div>
<svg class="b" style="left:47px;top:1107.9099999999999px;" width="11" height="14" viewBox="0 0 11 14" fill="none" stroke-linecap="round" stroke-linejoin="round"><g stroke="#d2d2e2" stroke-width="2.18"><path d="M3.2 2.6 L7.8 7 L3.2 11.4"/></g></svg>
<div class="b" style="left:38.4px;top:1156.8px;width:5.3px;height:49.9px;background:#8ab573;"></div>
<svg class="b" style="left:47px;top:1161.7799999999997px;" width="11" height="14" viewBox="0 0 11 14" fill="none" stroke-linecap="round" stroke-linejoin="round"><g stroke="#d2d2e2" stroke-width="2.18"><path d="M3.2 2.6 L7.8 7 L3.2 11.4"/></g></svg>
<div class="b" style="left:38.4px;top:1210.6px;width:5.3px;height:49.9px;background:#8ab573;"></div>
<svg class="b" style="left:47px;top:1215.6499999999996px;" width="11" height="14" viewBox="0 0 11 14" fill="none" stroke-linecap="round" stroke-linejoin="round"><g stroke="#d2d2e2" stroke-width="2.18"><path d="M3.2 2.6 L7.8 7 L3.2 11.4"/></g></svg>
<div class="b" style="left:38.4px;top:1264.5px;width:5.3px;height:49.9px;background:#8ab573;"></div>
<svg class="b" style="left:47px;top:1269.5199999999995px;" width="11" height="14" viewBox="0 0 11 14" fill="none" stroke-linecap="round" stroke-linejoin="round"><g stroke="#d2d2e2" stroke-width="2.18"><path d="M3.2 2.6 L7.8 7 L3.2 11.4"/></g></svg>
<div class="b" style="left:38.4px;top:1318.4px;width:5.3px;height:49.9px;background:#8ab573;"></div>
<svg class="b" style="left:47px;top:1323.3899999999994px;" width="11" height="14" viewBox="0 0 11 14" fill="none" stroke-linecap="round" stroke-linejoin="round"><g stroke="#d2d2e2" stroke-width="2.18"><path d="M3.2 2.6 L7.8 7 L3.2 11.4"/></g></svg>
<div class="b" style="left:2272.3px;top:887.3px;width:80px;height:94px;background:#22242a;border-radius:3px;"></div>
<div class="b" style="left:2277.4px;top:1003.3px;width:4.8px;height:111px;background:#4a70d8;"></div>
<div class="b" style="left:2317.7px;top:1058.3px;width:16.6px;height:2.2px;background:#5a86e8;"></div>
<div class="b" style="left:2278px;top:1143.3px;width:3px;height:21.700000000000045px;background:#23252b;"></div>
<div class="b" style="left:2278px;top:1173.3px;width:3px;height:20.0px;background:#23252b;"></div>
<div class="b" style="left:2278px;top:1201.7px;width:3px;height:21.59999999999991px;background:#23252b;"></div>
<div class="b" style="left:2278px;top:1231.7px;width:3px;height:21.59999999999991px;background:#23252b;"></div>
<div class="b" style="left:2278px;top:1261.7px;width:3px;height:18.299999999999955px;background:#23252b;"></div>
<div class="b" style="left:2272px;top:1290.6px;width:80.7px;height:81.4px;background:#2a2c32;border:1px solid #383a41;border-radius:3px;border-bottom:none;border-bottom-left-radius:0;border-bottom-right-radius:0;"></div>
<svg class="b" style="left:2305px;top:1312px;" width="15" height="13" viewBox="0 0 15 13" fill="none" stroke-linecap="round" stroke-linejoin="round"><g stroke="#d2d2e2" stroke-width="2.42"><path d="M2.8 4 L7.4 8.6 L12 4"/></g></svg>
</div>
<div class="tx">
<span class="t" style="font-family:'Liberation Sans', sans-serif;font-size:19.4px;font-weight:400;color:#d2d2e2;-webkit-text-stroke:0.8px #d2d2e2;letter-spacing:1.150px;left:1170.42px;top:694.48px;line-height:23px;">Logs</span>
<span class="t" style="font-family:'Liberation Sans', sans-serif;font-size:16.6px;font-weight:400;color:#d2d2e2;-webkit-text-stroke:0.8px #d2d2e2;letter-spacing:1.033px;left:67.80px;top:771.55px;line-height:20px;">Time</span>
<span class="t" style="font-family:'Liberation Sans', sans-serif;font-size:16.6px;font-weight:400;color:#d2d2e2;-webkit-text-stroke:0.8px #d2d2e2;letter-spacing:0.833px;left:193.80px;top:771.55px;line-height:20px;">Unique labels</span>
<span class="t" style="font-family:'Liberation Sans', sans-serif;font-size:16.6px;font-weight:400;color:#d2d2e2;-webkit-text-stroke:0.8px #d2d2e2;letter-spacing:0.790px;left:390.50px;top:771.55px;line-height:20px;">Wrap lines</span>
<span class="t" style="font-family:'Liberation Sans', sans-serif;font-size:16.6px;font-weight:400;color:#d2d2e2;-webkit-text-stroke:0.8px #d2d2e2;letter-spacing:0.852px;left:562.20px;top:771.55px;line-height:20px;">Prettify JSON</span>
<span class="t" style="font-family:'Liberation Sans', sans-serif;font-size:16.6px;font-weight:400;color:#d2d2e2;-webkit-text-stroke:0.8px #d2d2e2;letter-spacing:0.979px;left:759.50px;top:771.55px;line-height:20px;">Deduplication</span>
<span class="t" style="font-family:'Liberation Sans', sans-serif;font-size:19.4px;font-weight:400;color:#d2d2e2;-webkit-text-stroke:0.8px #d2d2e2;letter-spacing:1.201px;left:909.42px;top:769.78px;line-height:23px;">None</span>
<span class="t" style="font-family:'Liberation Sans', sans-serif;font-size:19.4px;font-weight:400;color:#9c9ca8;-webkit-text-stroke:0.3px #9c9ca8;letter-spacing:0.873px;left:1004.42px;top:769.78px;line-height:23px;">Exact</span>
<span class="t" style="font-family:'Liberation Sans', sans-serif;font-size:19.4px;font-weight:400;color:#9c9ca8;-webkit-text-stroke:0.3px #9c9ca8;letter-spacing:0.970px;left:1101.12px;top:769.78px;line-height:23px;">Numbers</span>
<span class="t" style="font-family:'Liberation Sans', sans-serif;font-size:19.4px;font-weight:400;color:#9c9ca8;-webkit-text-stroke:0.3px #9c9ca8;letter-spacing:0.794px;left:1230.42px;top:769.78px;line-height:23px;">Signature</span>
<span class="t" style="font-family:'Liberation Sans', sans-serif;font-size:16.6px;font-weight:400;color:#d2d2e2;-webkit-text-stroke:0.8px #d2d2e2;letter-spacing:0.806px;left:1887.80px;top:771.55px;line-height:20px;">Display results</span>
<span class="t" style="font-family:'Liberation Sans', sans-serif;font-size:19.4px;font-weight:400;color:#d2d2e2;-webkit-text-stroke:0.8px #d2d2e2;letter-spacing:1.182px;left:2045.12px;top:769.78px;line-height:23px;">Newest first</span>
<span class="t" style="font-family:'Liberation Sans', sans-serif;font-size:19.4px;font-weight:400;color:#9c9ca8;-webkit-text-stroke:0.3px #9c9ca8;letter-spacing:0.983px;left:2205.12px;top:769.78px;line-height:23px;">Oldest first</span>
<span class="t" style="font-family:'Liberation Sans', sans-serif;font-size:16.6px;font-weight:400;color:#9c9ca8;-webkit-text-stroke:0.8px #9c9ca8;letter-spacing:0.842px;left:32.80px;top:841.45px;line-height:20px;">Common labels:</span>
<span class="t" style="font-family:'Liberation Mono', 'DejaVu Sans Mono', monospace;font-size:14.6px;font-weight:400;color:#9c9ca8;-webkit-text-stroke:0.4px #9c9ca8;letter-spacing:-0.190px;left:177.62px;top:844.11px;line-height:18px;">wasmcloud-host</span>
<span class="t" style="font-family:'Liberation Sans', sans-serif;font-size:16.6px;font-weight:400;color:#9c9ca8;-webkit-text-stroke:0.8px #9c9ca8;letter-spacing:0.782px;left:327.80px;top:841.45px;line-height:20px;">Line limit:</span>
<span class="t" style="font-family:'Liberation Mono', 'DejaVu Sans Mono', monospace;font-size:17.5px;font-weight:400;color:#9c9ca8;-webkit-text-stroke:0.4px #9c9ca8;letter-spacing:-0.291px;left:417.25px;top:842.04px;line-height:21px;">1000 (10 returned)</span>
<span class="t" style="font-family:'Liberation Sans', sans-serif;font-size:16.6px;font-weight:400;color:#9c9ca8;-webkit-text-stroke:0.8px #9c9ca8;letter-spacing:0.918px;left:623.50px;top:841.45px;line-height:20px;">Total bytes processed:</span>
<span class="t" style="font-family:'Liberation Mono', 'DejaVu Sans Mono', monospace;font-size:17.5px;font-weight:400;color:#9c9ca8;-webkit-text-stroke:0.4px #9c9ca8;letter-spacing:0.041px;left:818.95px;top:842.04px;line-height:21px;">2.73 kB</span>
<span class="t" style="font-family:'Liberation Sans', sans-serif;font-size:19.4px;font-weight:400;color:#d2d2e2;-webkit-text-stroke:0.8px #d2d2e2;letter-spacing:1.027px;left:2230.42px;top:843.48px;line-height:23px;">Download</span>
<span class="t" style="font-family:'Liberation Mono', 'DejaVu Sans Mono', monospace;font-size:17.8px;font-weight:400;color:#d2d2e2;-webkit-text-stroke:0.5px #d2d2e2;letter-spacing:-0.426px;left:64.13px;top:892.36px;line-height:21px;">2024-02-22 12:51:12.131</span>
<span class="t" style="font-family:'Liberation Mono', 'DejaVu Sans Mono', monospace;font-size:17.8px;font-weight:400;color:#d2d2e2;-webkit-text-stroke:0.5px #d2d2e2;letter-spacing:-0.454px;left:311.73px;top:892.36px;line-height:21px;">{"body":"process link definition entry put","severity":"INFO","attributes":{"actor_id":"MDA72ZMXNGSGZ6XBQEVMKWISFTS6MTIU5SLVRMITSS7Z2SY62UNIFMBI","contract_id":"wasmcloud:httpserver","link_n</span>
<span class="t" style="font-family:'Liberation Mono', 'DejaVu Sans Mono', monospace;font-size:17.8px;font-weight:400;color:#d2d2e2;-webkit-text-stroke:0.5px #d2d2e2;letter-spacing:-0.454px;left:311.73px;top:918.26px;line-height:21px;">ame":"default","provider_id":"VAG3QITQQ2ODAOWB5TTQSDJ53XK3SHBEIFNK4AYJ5RKAX2UNSCAPHA5M"},"resources":{"service.name":"wasmcloud-host"},"instrumentation_scope":{"name":"opentelemetry-appender</span>
<span class="t" style="font-family:'Liberation Mono', 'DejaVu Sans Mono', monospace;font-size:17.8px;font-weight:400;color:#d2d2e2;-webkit-text-stroke:0.5px #d2d2e2;letter-spacing:-0.433px;left:311.73px;top:944.16px;line-height:21px;">-tracing","version":"0.2.0"}}</span>
<span class="t" style="font-family:'Liberation Mono', 'DejaVu Sans Mono', monospace;font-size:17.8px;font-weight:400;color:#d2d2e2;-webkit-text-stroke:0.5px #d2d2e2;letter-spacing:-0.426px;left:64.13px;top:972.13px;line-height:21px;">2024-02-22 12:51:12.131</span>
<span class="t" style="font-family:'Liberation Mono', 'DejaVu Sans Mono', monospace;font-size:17.8px;font-weight:400;color:#d2d2e2;-webkit-text-stroke:0.5px #d2d2e2;letter-spacing:-0.454px;left:311.73px;top:972.13px;line-height:21px;">{"body":"handling put link definition","severity":"INFO","attributes":{"actor_id":"MDA72ZMXNGSGZ6XBQEVMKWISFTS6MTIU5SLVRMITSS7Z2SY62UNIFMBI","contract_id":"wasmcloud:httpserver","link_nam</span>
<span class="t" style="font-family:'Liberation Mono', 'DejaVu Sans Mono', monospace;font-size:17.8px;font-weight:400;color:#d2d2e2;-webkit-text-stroke:0.5px #d2d2e2;letter-spacing:-0.454px;left:311.73px;top:998.03px;line-height:21px;">e":"default","provider_id":"VAG3QITQQ2ODAOWB5TTQSDJ53XK3SHBEIFNK4AYJ5RKAX2UNSCAPHA5M"},"resources":{"service.name":"wasmcloud-host"},"instrumentation_scope":{"name":"opentelemetry-appender-t</span>
<span class="t" style="font-family:'Liberation Mono', 'DejaVu Sans Mono', monospace;font-size:17.8px;font-weight:400;color:#d2d2e2;-webkit-text-stroke:0.5px #d2d2e2;letter-spacing:-0.431px;left:311.73px;top:1023.93px;line-height:21px;">racing","version":"0.2.0"}}</span>
<span class="t" style="font-family:'Liberation Mono', 'DejaVu Sans Mono', monospace;font-size:17.8px;font-weight:400;color:#d2d2e2;-webkit-text-stroke:0.5px #d2d2e2;letter-spacing:-0.426px;left:64.13px;top:1051.90px;line-height:21px;">2024-02-22 12:51:12.128</span>
<span class="t" style="font-family:'Liberation Mono', 'DejaVu Sans Mono', monospace;font-size:17.8px;font-weight:400;color:#d2d2e2;-webkit-text-stroke:0.5px #d2d2e2;letter-spacing:-0.454px;left:311.73px;top:1051.90px;line-height:21px;">{"body":"actor started","severity":"INFO","attributes":{"actor_ref":"file:///Users/egregory/testbed/hipy/build/http_hello_world_s.wasm"},"resources":{"service.name":"wasmcloud-host"},"instru</span>
<span class="t" style="font-family:'Liberation Mono', 'DejaVu Sans Mono', monospace;font-size:17.8px;font-weight:400;color:#d2d2e2;-webkit-text-stroke:0.5px #d2d2e2;letter-spacing:-0.448px;left:311.73px;top:1077.80px;line-height:21px;">mentation_scope":{"name":"opentelemetry-appender-tracing","version":"0.2.0"}}</span>
<span class="t" style="font-family:'Liberation Mono', 'DejaVu Sans Mono', monospace;font-size:17.8px;font-weight:400;color:#d2d2e2;-webkit-text-stroke:0.5px #d2d2e2;letter-spacing:-0.426px;left:64.13px;top:1105.77px;line-height:21px;">2024-02-22 12:51:11.191</span>
<span class="t" style="font-family:'Liberation Mono', 'DejaVu Sans Mono', monospace;font-size:17.8px;font-weight:400;color:#d2d2e2;-webkit-text-stroke:0.5px #d2d2e2;letter-spacing:-0.454px;left:311.73px;top:1105.77px;line-height:21px;">{"body":"provider started","severity":"INFO","attributes":{"link_name":"default","provider_ref":"wasmcloud.azurecr.io/httpserver:0.19.1"},"resources":{"service.name":"wasmcloud-host"},"instr</span>
<span class="t" style="font-family:'Liberation Mono', 'DejaVu Sans Mono', monospace;font-size:17.8px;font-weight:400;color:#d2d2e2;-webkit-text-stroke:0.5px #d2d2e2;letter-spacing:-0.448px;left:311.73px;top:1131.67px;line-height:21px;">umentation_scope":{"name":"opentelemetry-appender-tracing","version":"0.2.0"}}</span>
<span class="t" style="font-family:'Liberation Mono', 'DejaVu Sans Mono', monospace;font-size:17.8px;font-weight:400;color:#d2d2e2;-webkit-text-stroke:0.5px #d2d2e2;letter-spacing:-0.426px;left:64.13px;top:1159.64px;line-height:21px;">2024-02-22 12:51:10.516</span>
<span class="t" style="font-family:'Liberation Mono', 'DejaVu Sans Mono', monospace;font-size:17.8px;font-weight:400;color:#d2d2e2;-webkit-text-stroke:0.5px #d2d2e2;letter-spacing:-0.454px;left:311.73px;top:1159.64px;line-height:21px;">{"body":"handling launch provider","severity":"INFO","attributes":{"link_name":"default","provider_ref":"wasmcloud.azurecr.io/httpserver:0.19.1"},"resources":{"service.name":"wasmcloud-hos</span>
<span class="t" style="font-family:'Liberation Mono', 'DejaVu Sans Mono', monospace;font-size:17.8px;font-weight:400;color:#d2d2e2;-webkit-text-stroke:0.5px #d2d2e2;letter-spacing:-0.449px;left:311.73px;top:1185.54px;line-height:21px;">t"},"instrumentation_scope":{"name":"opentelemetry-appender-tracing","version":"0.2.0"}}</span>
<span class="t" style="font-family:'Liberation Mono', 'DejaVu Sans Mono', monospace;font-size:17.8px;font-weight:400;color:#d2d2e2;-webkit-text-stroke:0.5px #d2d2e2;letter-spacing:-0.426px;left:64.13px;top:1213.51px;line-height:21px;">2024-02-22 12:48:53.156</span>
<span class="t" style="font-family:'Liberation Mono', 'DejaVu Sans Mono', monospace;font-size:17.8px;font-weight:400;color:#d2d2e2;-webkit-text-stroke:0.5px #d2d2e2;letter-spacing:-0.454px;left:311.73px;top:1213.51px;line-height:21px;">{"body":"wasmCloud host started","severity":"INFO","attributes":{"host_id":"ND3IWZ6XEGKUM5HKH36UZAXCBD57Z3SBZKEV3VNI4T3XF3DUFESP2O5K"},"resources":{"service.name":"wasmcloud-host"},"instrume</span>
<span class="t" style="font-family:'Liberation Mono', 'DejaVu Sans Mono', monospace;font-size:17.8px;font-weight:400;color:#d2d2e2;-webkit-text-stroke:0.5px #d2d2e2;letter-spacing:-0.448px;left:311.73px;top:1239.41px;line-height:21px;">ntation_scope":{"name":"opentelemetry-appender-tracing","version":"0.2.0"}}</span>
<span class="t" style="font-family:'Liberation Mono', 'DejaVu Sans Mono', monospace;font-size:17.8px;font-weight:400;color:#d2d2e2;-webkit-text-stroke:0.5px #d2d2e2;letter-spacing:-0.426px;left:64.13px;top:1267.38px;line-height:21px;">2024-02-22 12:48:53.152</span>
<span class="t" style="font-family:'Liberation Mono', 'DejaVu Sans Mono', monospace;font-size:17.8px;font-weight:400;color:#d2d2e2;-webkit-text-stroke:0.5px #d2d2e2;letter-spacing:-0.454px;left:311.73px;top:1267.38px;line-height:21px;">{"body":"bucket already exists. Skipping creation.","severity":"INFO","attributes":{"bucket":"CONFIGDATA_default"},"resources":{"service.name":"wasmcloud-host"},"instrumentation_scope":{"nam</span>
<span class="t" style="font-family:'Liberation Mono', 'DejaVu Sans Mono', monospace;font-size:17.8px;font-weight:400;color:#d2d2e2;-webkit-text-stroke:0.5px #d2d2e2;letter-spacing:-0.445px;left:311.73px;top:1293.28px;line-height:21px;">e":"opentelemetry-appender-tracing","version":"0.2.0"}}</span>
<span class="t" style="font-family:'Liberation Mono', 'DejaVu Sans Mono', monospace;font-size:17.8px;font-weight:400;color:#d2d2e2;-webkit-text-stroke:0.5px #d2d2e2;letter-spacing:-0.426px;left:64.13px;top:1321.25px;line-height:21px;">2024-02-22 12:48:53.152</span>
<span class="t" style="font-family:'Liberation Mono', 'DejaVu Sans Mono', monospace;font-size:17.8px;font-weight:400;color:#d2d2e2;-webkit-text-stroke:0.5px #d2d2e2;letter-spacing:-0.454px;left:311.73px;top:1321.25px;line-height:21px;">{"body":"bucket already exists. Skipping creation.","severity":"INFO","attributes":{"bucket":"LATTICEDATA_default"},"resources":{"service.name":"wasmcloud-host"},"instrumentation_scope":{"na</span>
<span class="t" style="font-family:'Liberation Mono', 'DejaVu Sans Mono', monospace;font-size:17.8px;font-weight:400;color:#d2d2e2;-webkit-text-stroke:0.5px #d2d2e2;letter-spacing:-0.445px;left:311.73px;top:1347.15px;line-height:21px;">me":"opentelemetry-appender-tracing","version":"0.2.0"}}</span>
<span class="t" style="font-family:'Liberation Sans', sans-serif;font-size:19.4px;font-weight:400;color:#9c9ca8;-webkit-text-stroke:0.8px #9c9ca8;letter-spacing:1.382px;left:2288.42px;top:903.28px;line-height:23px;">Start</span>
<span class="t" style="font-family:'Liberation Sans', sans-serif;font-size:19.4px;font-weight:400;color:#9c9ca8;-webkit-text-stroke:0.8px #9c9ca8;letter-spacing:2.196px;left:2301.72px;top:922.78px;line-height:23px;">of</span>
<span class="t" style="font-family:'Liberation Sans', sans-serif;font-size:19.4px;font-weight:400;color:#9c9ca8;-webkit-text-stroke:0.8px #9c9ca8;letter-spacing:0.971px;left:2285.12px;top:941.78px;line-height:23px;">range</span>
<span class="t" style="font-family:'Liberation Sans', sans-serif;font-size:16.6px;font-weight:400;color:#5a86e8;-webkit-text-stroke:0.3px #5a86e8;letter-spacing:-0.025px;left:2293.80px;top:1023.25px;line-height:20px;">12:51:12</span>
<span class="t" style="font-family:'Liberation Sans', sans-serif;font-size:16.6px;font-weight:400;color:#5a86e8;-webkit-text-stroke:0.3px #5a86e8;letter-spacing:0.713px;left:2291.20px;top:1075.25px;line-height:20px;">12:48:53</span>
<span class="t" style="font-family:'Liberation Sans', sans-serif;font-size:19.4px;font-weight:400;color:#d2d2e2;-webkit-text-stroke:0.8px #d2d2e2;letter-spacing:0.948px;left:2286.12px;top:1329.48px;line-height:23px;">Older</span>
<span class="t" style="font-family:'Liberation Sans', sans-serif;font-size:19.4px;font-weight:400;color:#d2d2e2;-webkit-text-stroke:0.8px #d2d2e2;letter-spacing:1.146px;left:2292.12px;top:1348.48px;line-height:23px;">logs</span>
</div>
</section>
</body></html>
